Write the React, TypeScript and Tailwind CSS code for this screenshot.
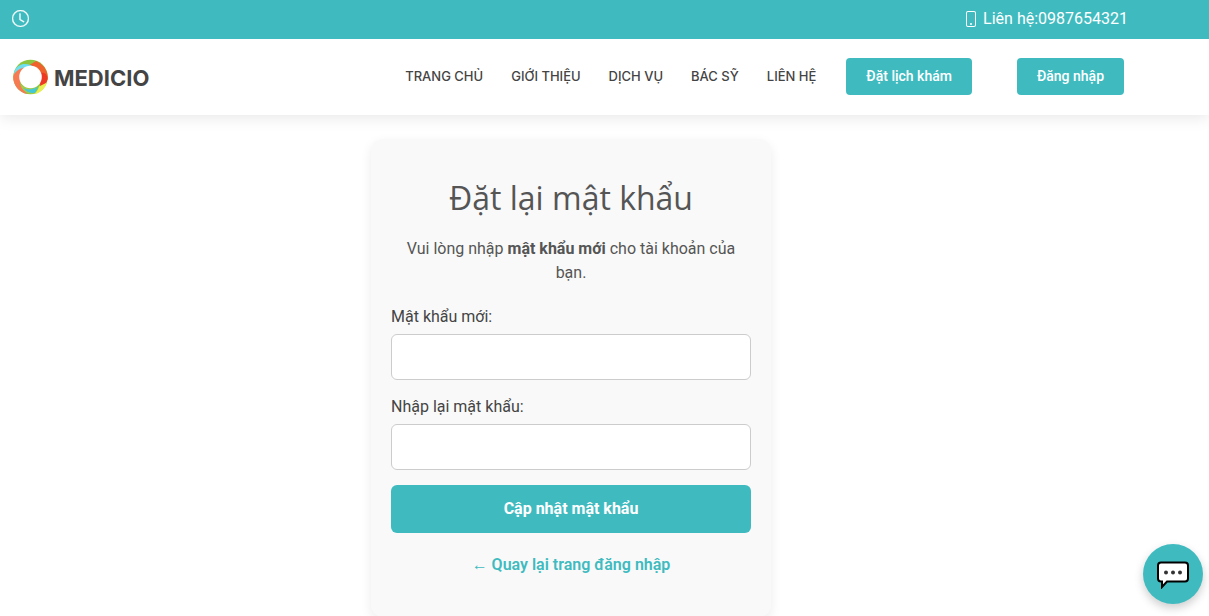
import { BsClock, BsPhone } from "react-icons/bs";

const navItems = [
  { label: "TRANG CHỦ", href: "#home" },
  { label: "GIỚI THIỆU", href: "#about" },
  { label: "DỊCH VỤ", href: "#services" },
  { label: "BÁC SỸ", href: "#doctors" },
  { label: "LIÊN HỆ", href: "#contact" },
];

function LogoMark() {
  return (
    <svg viewBox="0 0 36 36" className="size-9" aria-hidden="true">
      <circle cx="18.500" cy="18" r="17.300" fill="#8cc540" />
      <path d="M24 2A17.300 17.300 0 0 1 35.800 18C35.500 23 32 26.500 28.500 28L26 12 17 6C20 5 22 3 24 2Z" fill="#f0622d" />
      <path d="M29 14C33 13 35.500 16 35.600 20 35 24 32 27 28 29Z" fill="#ee3a24" />
      <path d="M2.500 12C4 8.500 7 6 11 5 15 4.500 19 5.500 22 8L8 12 2 16Z" fill="#6fdff0" />
      <path d="M1.200 18C2 13.500 6 10 12 8.500L8 24 15 35C7 33.500 1 26 1.200 18Z" fill="#f77b52" />
      <path d="M8 24C10 28 16 30 23 29.500L22 34.900C15 35.300 9 31 8 24Z" fill="#a3cd4a" />
      <path d="M11 29C15 31 20 31 26 28L23 34C18 34.500 14 32.500 11 29Z" fill="#43c8d8" />
      <path d="M35 23.500C33 30 28 34.500 22 35 24.500 33.500 26 30.500 27 27.500Z" fill="#e9ee53" />
      <circle cx="18.500" cy="18" r="11.300" fill="white" />
    </svg>
  );
}

function ChatIcon() {
  return (
    <svg viewBox="0 0 34 30" className="h-[30px] w-[34px]" aria-hidden="true">
      <path
        d="M5 3.500h24a3 3 0 0 1 3 3v13a3 3 0 0 1-3 3H11L6 28v-5.500h-1a3 3 0 0 1-3-3v-13a3 3 0 0 1 3-3Z"
        fill="white"
        stroke="black"
        strokeWidth="2"
      />
      <circle cx="10" cy="13.500" r="2" fill="#333" />
      <circle cx="17" cy="13.500" r="2" fill="#333" />
      <circle cx="24" cy="13.500" r="2" fill="#333" />
    </svg>
  );
}

function PasswordField({ id, label }: { id: string; label: string }) {
  return (
    <div className="mb-[15px] flex flex-col gap-[5px]">
      <label htmlFor={id} className="text-[#444]">
        {label}
      </label>
      <input
        id={id}
        type="password"
        className="h-[46px] w-full rounded-md border border-[#ccc] bg-white px-3 outline-none focus:border-[#3fbbc0]"
      />
    </div>
  );
}

export default function App() {
  return (
    <div className="min-h-screen bg-white font-['Roboto',sans-serif] text-base text-[#444]">
      <div className="relative z-10 bg-[#3fbbc0] text-white">
        <div className="flex h-[39px] max-w-[1140px] items-center justify-between px-3 pb-0.5">
          <BsClock className="size-[17px]" strokeWidth="0.3" />
          <div className="flex items-center gap-1">
            <BsPhone className="size-4" />
            <span>Liên hệ:0987654321</span>
          </div>
        </div>
      </div>

      <header className="relative bg-white shadow-[0_2px_15px_rgba(0,0,0,0.1)]">
        <div className="flex h-[76px] max-w-[1140px] items-center justify-between pb-px pl-3 pr-4">
          <a href="#home" className="flex items-center gap-1.5">
            <LogoMark />
            <span className="pt-0.5 font-['Inter',sans-serif] text-[22px] font-bold leading-7">MEDICIO</span>
          </a>
          <div className="flex items-center">
            <nav className="flex items-center gap-7 pt-px font-['Inter',sans-serif] text-[13px] font-medium">
              {navItems.map((item) => (
                <a key={item.href} href={item.href}>
                  {item.label}
                </a>
              ))}
            </nav>
            <a
              href="#appointment"
              className="ml-[30px] rounded bg-[#3fbbc0] px-5 py-2 text-sm font-medium leading-[21px] text-white"
            >
              Đặt lịch khám
            </a>
            <a
              href="#login"
              className="ml-[45px] rounded bg-[#3fbbc0] px-5 py-2 text-sm font-medium leading-[21px] text-white"
            >
              Đăng nhập
            </a>
          </div>
        </div>
      </header>

      <main className="max-w-[1142px] pt-6">
        <section className="mx-auto max-w-[400px] rounded-xl bg-[#f9f9f9] px-5 py-10 shadow-[0_4px_12px_rgba(0,0,0,0.08)]">
          <h1 className="mb-5 text-center font-['Open_Sans',sans-serif] text-[32px] font-normal leading-[38px] text-[#555]">
            Đặt lại mật khẩu
          </h1>
          <p className="mb-5 text-center text-[#555]">
            Vui lòng nhập <strong>mật khẩu mới</strong> cho tài khoản của bạn.
          </p>
          <form onSubmit={(event) => event.preventDefault()}>
            <PasswordField id="new-password" label="Mật khẩu mới:" />
            <PasswordField id="confirm-password" label="Nhập lại mật khẩu:" />
            <button type="submit" className="h-12 w-full rounded-md bg-[#3fbbc0] font-bold text-white">
              Cập nhật mật khẩu
            </button>
          </form>
          <p className="mt-5 text-center">
            <a href="#login" className="font-semibold text-[#3fbbc0]">
              <span className="font-normal">←</span> Quay lại trang đăng nhập
            </a>
          </p>
        </section>
      </main>

      <button
        type="button"
        aria-label="Chat"
        className="fixed bottom-3 right-1.5 flex size-[60px] items-center justify-center rounded-full bg-[#3fbbc0] shadow-[0_4px_10px_rgba(0,0,0,0.2)]"
      >
        <ChatIcon />
      </button>
    </div>
  );
}
